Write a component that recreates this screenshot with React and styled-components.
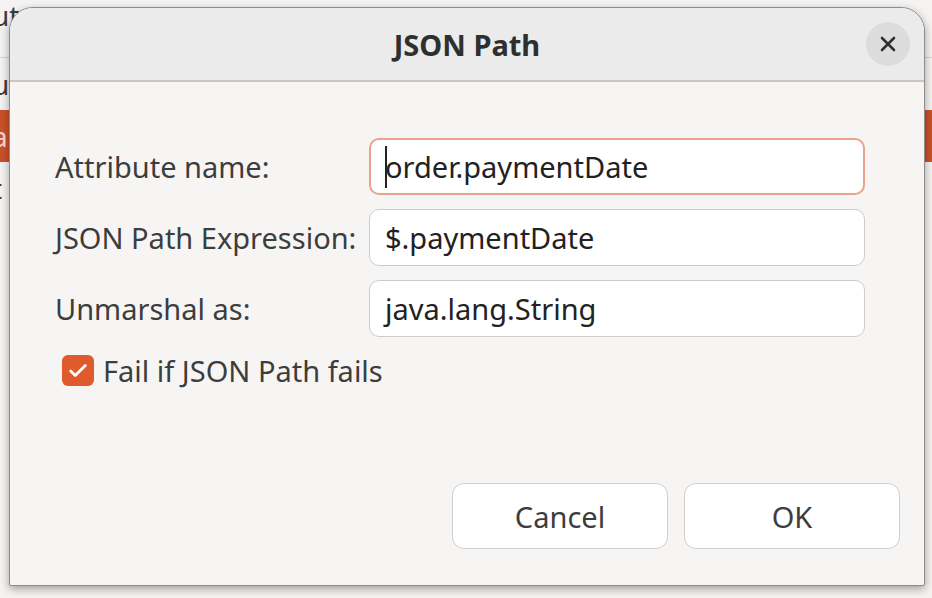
import styled, { createGlobalStyle } from 'styled-components';
import { X, Check } from 'lucide-react';

const GlobalStyle = createGlobalStyle`
    html, body {
        margin: 0;
        padding: 0;
        overflow: hidden;
    }

    body {
        font-family: "Noto Sans", "Open Sans", sans-serif;
    }
`;

const Desktop = styled.div`
    position: relative;
    width: 932px;
    height: 598px;
    background: #f4f3f2;
    overflow: hidden;
`;

const BgList = styled.div`
    display: flex;
    flex-direction: column;
    font-size: 28px;
    color: #3d3d3d;
`;

const BgHeader = styled.div`
    height: 57px;
    line-height: 30px;
    text-indent: -8px;
    border-bottom: 1px solid #d3d2d0;
`;

const BgRow = styled.div`
    height: 52px;
    display: flex;
    align-items: center;
    text-indent: -8px;
    background: ${ ( { selected } ) => selected ? '#c9512a' : 'transparent' };
    color: ${ ( { selected } ) => selected ? '#f6d8cc' : '#3d3d3d' };
`;

const Dialog = styled.div`
    position: absolute;
    left: 9px;
    top: 7px;
    width: 914px;
    height: 577px;
    display: flex;
    flex-direction: column;
    border: 1px solid #8d8c8b;
    border-radius: 24px 24px 2px 2px;
    background: #f6f5f4;
    box-shadow: 0 3px 8px rgba( 0, 0, 0, 0.35 );
    overflow: hidden;
    color: #3d3d3d;
`;

const Header = styled.header`
    display: grid;
    grid-template-columns: 1fr auto 1fr;
    align-items: center;
    height: 72px;
    padding: 0 14px;
    background: #ebebeb;
    border-bottom: 2px solid #c8c7c5;
`;

const Title = styled.h1`
    grid-column: 2;
    margin: 0;
    font-size: 29px;
    font-weight: 700;
    color: #2f2f2f;
`;

const CloseButton = styled.span`
    grid-column: 3;
    justify-self: end;
    width: 44px;
    height: 44px;
    border-radius: 50%;
    display: flex;
    align-items: center;
    justify-content: center;
    background: #dcdcdc;
    color: #2f2f2f;
`;

const Body = styled.main`
    flex: 1;
    display: flex;
    flex-direction: column;
    padding: 56px 24px 36px 45px;
`;

const Form = styled.div`
    display: grid;
    grid-template-columns: 314px 496px;
    row-gap: 14px;
    align-items: center;
`;

const Label = styled.label`
    font-size: 29px;
    color: #3d3d3d;
    white-space: nowrap;
`;

const Field = styled.div`
    box-sizing: border-box;
    height: 57px;
    display: flex;
    align-items: center;
    padding-left: ${ ( { focused } ) => focused ? '14px' : '15px' };
    background: #fff;
    border: ${ ( { focused } ) => focused ? '2px solid #eca28a' : '1px solid #cdccca' };
    border-radius: 10px;
    font-size: 29px;
    color: #222;
    white-space: nowrap;
`;

const Caret = styled.span`
    display: inline-block;
    width: 2px;
    height: 42px;
    margin-right: -2px;
    background: #222;
`;

const CheckRow = styled.div`
    display: flex;
    align-items: center;
    gap: 9px;
    margin: 14px 0 0 7px;
    font-size: 29px;
    color: #3d3d3d;
`;

const CheckBox = styled.span`
    width: 32px;
    height: 31px;
    border-radius: 6px;
    background: #df5a2c;
    display: flex;
    align-items: center;
    justify-content: center;
    color: #fff;
`;

const Footer = styled.footer`
    margin-top: auto;
    display: flex;
    justify-content: flex-end;
    gap: 16px;
`;

const Button = styled.button`
    box-sizing: border-box;
    width: 216px;
    height: 66px;
    background: #fff;
    border: 1.5px solid #cfcecc;
    border-radius: 12px;
    font-family: inherit;
    font-size: 29px;
    color: #3d3d3d;
`;

const fields = [
    { label: 'Attribute name:', value: 'order.paymentDate', focused: true },
    { label: 'JSON Path Expression:', value: '$.paymentDate' },
    { label: 'Unmarshal as:', value: 'java.lang.String' },
];

export default function App() {
    return (
        <>
            <GlobalStyle />
            <Desktop>
                <BgList>
                    <BgHeader>ut</BgHeader>
                    <BgRow>ul</BgRow>
                    <BgRow selected>a</BgRow>
                    <BgRow>t</BgRow>
                </BgList>

                <Dialog>
                    <Header>
                        <Title>JSON Path</Title>
                        <CloseButton>
                            <X size={ 24 } strokeWidth={ 2.6 } />
                        </CloseButton>
                    </Header>

                    <Body>
                        <Form>
                            { fields.map( ( { label, value, focused } ) => [
                                <Label key={ label }>{ label }</Label>,
                                <Field key={ value } focused={ focused }>
                                    { focused && <Caret /> }
                                    { value }
                                </Field>,
                            ] ) }
                        </Form>

                        <CheckRow>
                            <CheckBox>
                                <Check size={ 22 } strokeWidth={ 3 } />
                            </CheckBox>
                            Fail if JSON Path fails
                        </CheckRow>

                        <Footer>
                            <Button>Cancel</Button>
                            <Button>OK</Button>
                        </Footer>
                    </Body>
                </Dialog>
            </Desktop>
        </>
    );
}
